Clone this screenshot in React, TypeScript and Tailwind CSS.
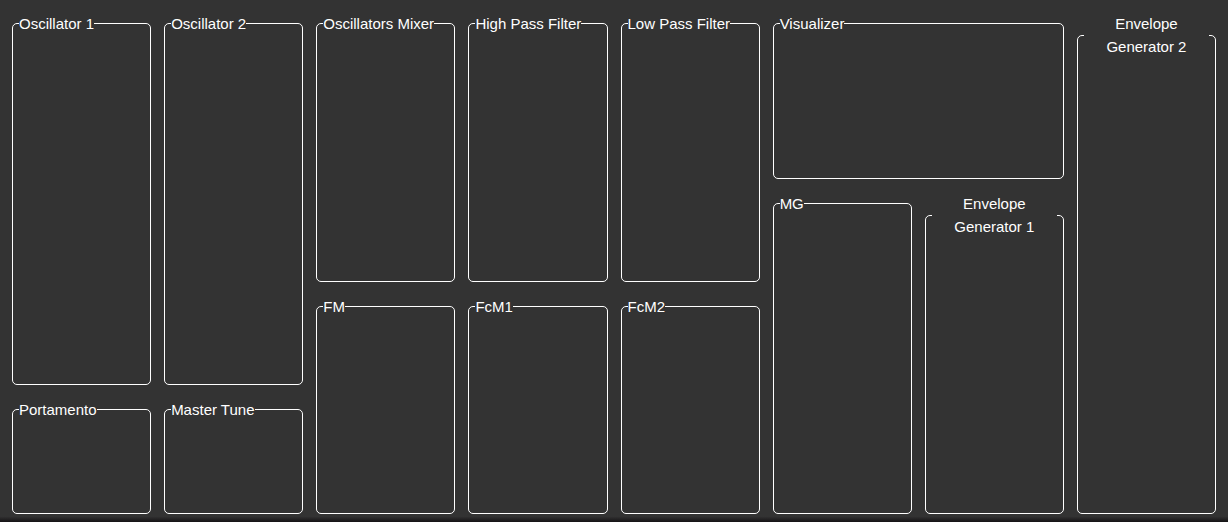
type Module = { title: string; area: string; centered?: boolean };

const modules: Module[] = [
  { title: "Oscillator 1", area: "col-start-1 row-start-1 row-span-15" },
  { title: "Portamento", area: "col-start-1 row-start-16 row-span-5" },
  { title: "Oscillator 2", area: "col-start-2 row-start-1 row-span-15" },
  { title: "Master Tune", area: "col-start-2 row-start-16 row-span-5" },
  { title: "Oscillators Mixer", area: "col-start-3 row-start-1 row-span-11" },
  { title: "FM", area: "col-start-3 row-start-12 row-span-9" },
  { title: "High Pass Filter", area: "col-start-4 row-start-1 row-span-11" },
  { title: "FcM1", area: "col-start-4 row-start-12 row-span-9" },
  { title: "Low Pass Filter", area: "col-start-5 row-start-1 row-span-11" },
  { title: "FcM2", area: "col-start-5 row-start-12 row-span-9" },
  { title: "Visualizer", area: "col-start-6 col-span-2 row-start-1 row-span-7" },
  { title: "MG", area: "col-start-6 row-start-8 row-span-13" },
  { title: "Envelope Generator 1", area: "col-start-7 row-start-8 row-span-13", centered: true },
  { title: "Envelope Generator 2", area: "col-start-8 row-start-1 row-span-20", centered: true },
];

function ModulePanel({ title, area, centered }: Module) {
  return (
    <fieldset className={`min-w-0 rounded-[5px] border border-white px-1.5 ${area}`}>
      <legend className={centered ? "w-full text-center" : ""}>{title}</legend>
    </fieldset>
  );
}

export default function App() {
  return (
    <main className="flex min-h-screen flex-col bg-[#333333] font-['Liberation_Sans',Arial,sans-serif] text-[15px] leading-[23px] text-white">
      <div className="grid flex-1 grid-cols-8 grid-rows-[repeat(20,minmax(0,1fr))] gap-[13px] px-3 pt-3">
        {modules.map((module) => (
          <ModulePanel key={module.title} {...module} />
        ))}
      </div>
      <div className="h-2 bg-linear-to-b from-[#333333] from-30% to-[#151315]" />
    </main>
  );
}
